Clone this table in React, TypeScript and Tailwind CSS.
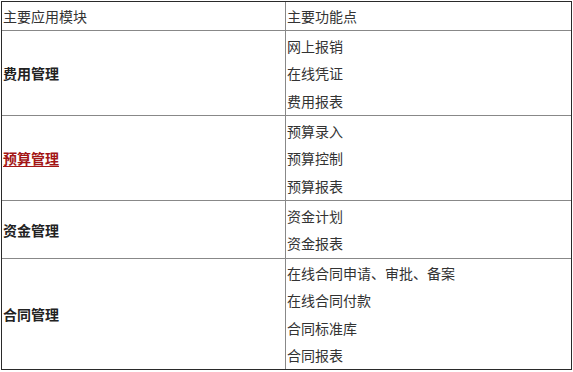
export default function App() {
  const rows = [
    { name: "费用管理", h: "h-[85px]", items: ["网上报销", "在线凭证", "费用报表"], link: false },
    { name: "预算管理", h: "h-[85px]", items: ["预算录入", "预算控制", "预算报表"], link: true },
    { name: "资金管理", h: "h-[58px]", items: ["资金计划", "资金报表"], link: false },
    { name: "合同管理", h: "h-[111px]", items: ["在线合同申请、审批、备案", "在线合同付款", "合同标准库", "合同报表"], link: false },
  ];
  return (
    <div className="p-[1px] bg-white min-h-[372px]">
      <div className="w-[571px] border border-[#2a2a2a] text-[14px] text-[#333] font-['Microsoft_YaHei','Noto_Sans_CJK_SC',sans-serif] leading-none">
        <div className="flex h-[28px]">
          <div className="w-[283px] flex items-center pl-[1px]">主要应用模块</div>
          <div className="flex-1 border-l border-[#888] flex items-center pl-[1px]">主要功能点</div>
        </div>
        {rows.map((r) => (
          <div key={r.name} className={`flex border-t border-[#888] ${r.h}`}>
            <div className="w-[283px] flex items-center pl-[1px]">
              {r.link ? (
                <span className="font-bold text-[#a31515] underline underline-offset-2">{r.name}</span>
              ) : (
                <span className="font-bold text-[#222]">{r.name}</span>
              )}
            </div>
            <div className="flex-1 border-l border-[#888] flex flex-col justify-center pl-[1px]">
              {r.items.map((it) => (
                <div key={it} className="h-[27.5px] flex items-center">{it}</div>
              ))}
            </div>
          </div>
        ))}
      </div>
    </div>
  );
}
